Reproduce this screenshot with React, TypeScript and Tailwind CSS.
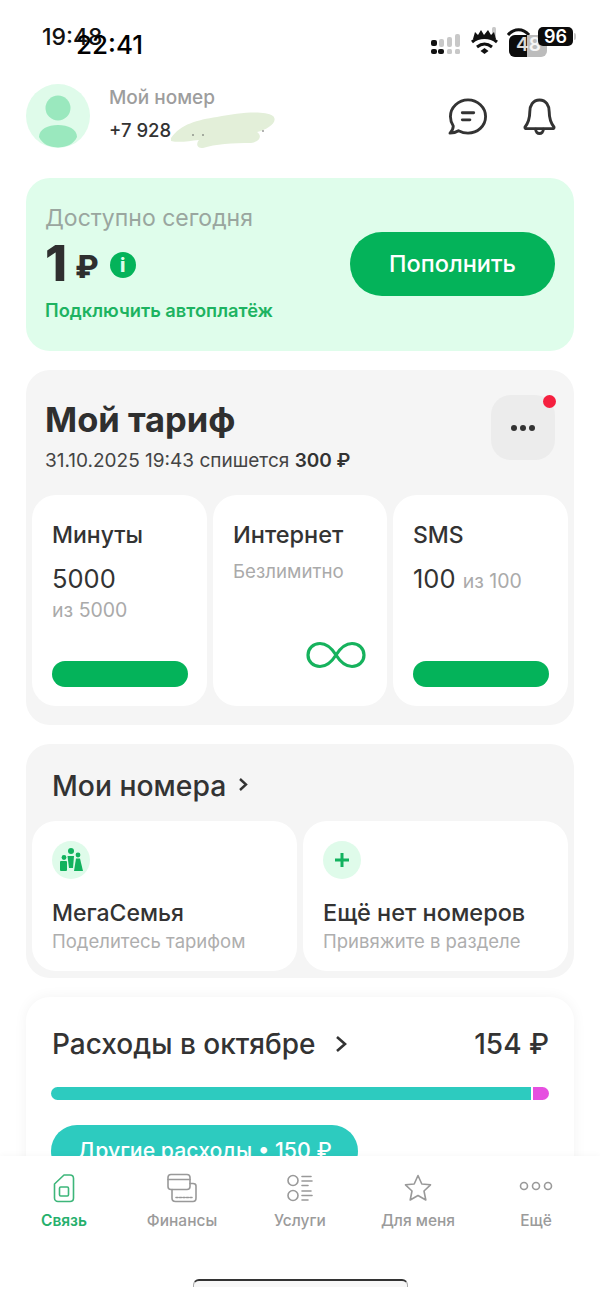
const font = { fontFamily: "Inter, 'Noto Sans', sans-serif" };

const StatusBar = () => (
  <div className="relative h-[84px] shrink-0">
    {/* two status bars on top of each other, as in the screenshot */}
    <span className="absolute left-[42px] top-[23px] text-[23px] font-medium leading-[28px] text-[#111]">19:48</span>
    <span className="absolute left-[76px] top-[30px] text-[26px] font-medium leading-[30px] text-black">22:41</span>
    <svg className="absolute left-[425px] top-[20px]" width="110" height="42" viewBox="0 0 110 42">
      <g fill="#c8c8c8">
        <rect x="14" y="19" width="5" height="8" rx="2" />
        <rect x="22" y="17" width="5" height="10" rx="2" />
        <rect x="30" y="14" width="5" height="13" rx="2" />
        <rect x="22" y="29" width="5" height="5" rx="1.500" />
        <rect x="30" y="29" width="5" height="5" rx="1.500" />
        <rect x="67" y="7" width="4" height="10" rx="1.500" />
      </g>
      <g fill="#111">
        <rect x="6" y="20" width="6" height="6" rx="2" />
        <rect x="6" y="29" width="6" height="5" rx="2" />
        <rect x="13" y="29" width="6" height="5" rx="2" />
      </g>
      <g fill="none" stroke="#111" strokeWidth="3">
        <path d="M47 22 C54 16 65 16 72 22" />
        <path d="M52 27 C57 23 62 23 67 27" />
        <path d="M83 15 C89 8 98 8 104 15" />
      </g>
      <path d="M48 19 L50 12 L53 15 L56 10 L59 15 L63 10 L66 15 L69 12 L71 19 Z" fill="#111" />
      <path d="M55.500 31 L59.500 28 L63.500 31 L59.500 34 Z" fill="#111" />
    </svg>
    <div className="absolute left-[509px] top-[35px] flex h-[22px] w-[38px] overflow-hidden rounded-[6px] bg-[#bcbcbc]">
      <div className="h-full w-[18px] bg-[#0c0c0c]" />
    </div>
    <span className="absolute left-[516px] top-[34px] text-[19px] font-semibold leading-[22px] text-white/85">48</span>
    <div className="absolute left-[538px] top-[27px] flex h-[19px] w-[35px] items-center justify-center rounded-[5px] bg-[#0c0c0c] text-[18px] font-semibold leading-none text-white">
      96
    </div>
    <div className="absolute left-[574px] top-[33px] h-[7px] w-[2px] rounded-r bg-[#c8c8c8]" />
  </div>
);

const Header = () => (
  <div className="flex h-[94px] shrink-0 items-start justify-between pl-[26px] pr-[44px]">
    <div className="flex items-start gap-[19px]">
      <div className="flex h-[64px] w-[64px] items-center justify-center overflow-hidden rounded-full bg-[#DFFBEA]">
        <svg width="64" height="64" viewBox="0 0 64 64" fill="#9AE8BE">
          <circle cx="32" cy="24" r="12.500" />
          <path d="M13 53 C13 45 22 41 32 41 C42 41 51 45 51 53 C48 60 40 63.500 32 63.500 C24 63.500 16 60 13 53 Z" />
        </svg>
      </div>
      <div className="relative">
        <div className="mt-[2px] text-[19px] font-medium leading-[24px] text-[#9d9d9d]">Мой номер</div>
        <div className="mt-[8px] text-[18.500px] font-medium leading-[24px] text-[#333]">+7 928</div>
        <svg className="absolute left-[58px] top-[24px]" width="112" height="44" viewBox="0 0 112 44">
          <path
            d="M4 30 C14 16 30 12 50 9 C72 5 96 2 106 8 C112 14 100 22 90 24 C96 28 92 34 84 35 C66 35 48 36 36 40 C28 40 30 34 32 32 C22 33 12 35 4 33 Z"
            fill="#E3EFD9"
          />
          <circle cx="26" cy="27" r="0.800" fill="#555" />
          <circle cx="36" cy="27" r="0.800" fill="#555" />
          <circle cx="96" cy="23" r="0.800" fill="#555" />
        </svg>
      </div>
    </div>
    <div className="flex items-center gap-[35px] pt-[13px]">
      <svg width="40" height="38" viewBox="0 0 42 40" fill="none" stroke="#333" strokeWidth="3" strokeLinejoin="round" strokeLinecap="round">
        <path d="M21 2 C31 2 39.500 10 39.500 19.500 C39.500 29.500 31 37 21 37 C17 37 14 36 11 34.500 C8 36.500 5 37 2 37 C4 35 5.500 32.500 5.500 29.500 C3.500 26.500 2.500 23 2.500 19.500 C2.500 10 11 2 21 2 Z" />
        <path d="M15 15.500 H27" />
        <path d="M15 23 H23" />
      </svg>
      <svg width="33" height="39" viewBox="0 0 34 40" fill="none" stroke="#333" strokeWidth="3" strokeLinejoin="round" strokeLinecap="round">
        <path d="M17 3 C10 3 7 9 7 15 C7 22 5 27 2 31 C2 32 3 32.500 4 32.500 H30 C31 32.500 32 32 32 31 C29 27 27 22 27 15 C27 9 24 3 17 3 Z" />
        <path d="M13 33 C13 39 21 39 21 33" />
      </svg>
    </div>
  </div>
);

const BalanceCard = () => (
  <section className="flex h-[173px] shrink-0 items-start justify-between rounded-[24px] bg-[#DFFDEB] px-[19px] pt-[26px]">
    <div>
      <div className="text-[23px] leading-[28px] text-[#9aa69f]">Доступно сегодня</div>
      <div className="mt-[6px] flex h-[50px] items-center">
        <span className="text-[50px] font-extrabold leading-[50px] text-[#2f2f2f]">1</span>
        <span className="ml-[8px] mt-[7px] text-[31px] font-extrabold leading-none text-[#2f2f2f]">₽</span>
        <span className="ml-[11px] mt-[4px] flex h-[26px] w-[26px] items-center justify-center rounded-full bg-[#04B35A] text-[19px] font-extrabold leading-none text-[#DFFDEB]">
          i
        </span>
      </div>
      <div className="mt-[10px] text-[18.300px] font-semibold leading-[24px] text-[#1DB361]">Подключить автоплатёж</div>
    </div>
    <button className="mt-[28px] flex h-[64px] w-[205px] items-center justify-center rounded-full bg-[#04B35A] text-[23.500px] font-medium text-white">
      Пополнить
    </button>
  </section>
);

const Bar = () => <div className="h-[26px] w-[136px] rounded-full bg-[#04B35A]" />;

const TariffCard = () => (
  <section className="h-[355px] shrink-0 rounded-[24px] bg-[#F5F5F5] px-[6px] pt-[25px]">
    <div className="flex h-[100px] items-start justify-between pl-[13px] pr-[13px]">
      <div>
        <h2 className="text-[34.500px] font-bold leading-[50px] text-[#2f2f2f]">Мой тариф</h2>
        <div className="mt-[4px] text-[19px] leading-[24px] text-[#444]">
          31.10.2025 19:43 спишется <span className="font-semibold text-[#333]">300 ₽</span>
        </div>
      </div>
      <div className="relative flex h-[65px] w-[64px] items-center justify-center rounded-[20px] bg-[#ECECEC]">
        <svg width="26" height="8" viewBox="0 0 26 8" fill="#333">
          <circle cx="4" cy="4" r="3" />
          <circle cx="13" cy="4" r="3" />
          <circle cx="22" cy="4" r="3" />
        </svg>
        <span className="absolute right-[-1px] top-[0px] h-[13px] w-[13px] rounded-full bg-[#F5203F]" />
      </div>
    </div>
    <div className="grid grid-cols-[175px_174px_175px] gap-[6px]">
      <div className="flex h-[211px] flex-col rounded-[24px] bg-white pl-[20px] pt-[26px]">
        <div className="text-[23px] font-medium leading-[28px] text-[#333]">Минуты</div>
        <div className="mt-[15px] text-[25.500px] leading-[30px] text-[#333]">5000</div>
        <div className="mt-[4px] text-[19.500px] leading-[24px] text-[#aaa]">из 5000</div>
        <div className="mb-[19px] mt-auto">
          <Bar />
        </div>
      </div>
      <div className="relative flex h-[211px] flex-col rounded-[24px] bg-white pl-[20px] pt-[26px]">
        <div className="text-[23.500px] font-medium leading-[28px] text-[#333]">Интернет</div>
        <div className="mt-[11px] text-[18.700px] leading-[24px] text-[#aaa]">Безлимитно</div>
        <svg className="mb-[37px] ml-[73px] mt-auto" width="60" height="28" viewBox="0 0 60 28" fill="none" stroke="#16B25D" strokeWidth="3.200">
          <path d="M30 14 C25 6 20 2.500 14 2.500 C7 2.500 2 7.500 2 14 C2 20.500 7 25.500 14 25.500 C20 25.500 25 22 30 14 C35 6 40 2.500 46 2.500 C53 2.500 58 7.500 58 14 C58 20.500 53 25.500 46 25.500 C40 25.500 35 22 30 14 Z" />
        </svg>
      </div>
      <div className="flex h-[211px] flex-col rounded-[24px] bg-white pl-[20px] pt-[26px]">
        <div className="text-[23px] font-medium leading-[28px] text-[#333]">SMS</div>
        <div className="mt-[15px] text-[25.500px] leading-[30px] text-[#333]">
          100 <span className="text-[19.500px] text-[#aaa]">из 100</span>
        </div>
        <div className="mb-[19px] mt-auto">
          <Bar />
        </div>
      </div>
    </div>
  </section>
);

const NumbersCard = () => (
  <section className="h-[234px] shrink-0 rounded-[24px] bg-[#F5F5F5] px-[6px] pt-[21px]">
    <div className="flex h-[56px] items-start pl-[20px]">
      <h2 className="text-[28.300px] font-medium leading-[42px] text-[#333]">Мои номера</h2>
      <svg className="ml-[12px] mt-[12px]" width="10" height="15" viewBox="0 0 10 15" fill="none" stroke="#333" strokeWidth="2.400">
        <path d="M2 2 L8 7.500 L2 13" />
      </svg>
    </div>
    <div className="grid grid-cols-2 gap-[6px]">
      <div className="h-[150px] rounded-[24px] bg-white pl-[20px] pt-[20px]">
        <div className="flex h-[38px] w-[38px] items-center justify-center rounded-full bg-[#DFFBEA]">
          <svg width="26" height="26" viewBox="0 0 26 26" fill="#12B25E">
            <circle cx="13" cy="4" r="3" />
            <circle cx="20" cy="8" r="2.400" />
            <circle cx="6" cy="10.500" r="2.400" />
            <path d="M9.500 9 H16 L15 21 H11 Z" />
            <rect x="2" y="14" width="7" height="10" rx="1" />
            <path d="M18 11.500 H22 L25 24 H16 Z" />
          </svg>
        </div>
        <div className="mt-[20px] text-[23px] font-medium leading-[28px] text-[#333]">МегаСемья</div>
        <div className="mt-[2px] text-[18.500px] leading-[24px] text-[#aeaeae]">Поделитесь тарифом</div>
      </div>
      <div className="h-[150px] rounded-[24px] bg-white pl-[20px] pt-[20px]">
        <div className="flex h-[38px] w-[38px] items-center justify-center rounded-full bg-[#DFFBEA]">
          <svg width="18" height="18" viewBox="0 0 18 18" fill="none" stroke="#12B25E" strokeWidth="3">
            <path d="M9 2 V16 M2 9 H16" />
          </svg>
        </div>
        <div className="mt-[20px] text-[23.500px] font-medium leading-[28px] text-[#333]">Ещё нет номеров</div>
        <div className="mt-[2px] text-[18.500px] leading-[24px] text-[#aeaeae]">Привяжите в разделе</div>
      </div>
    </div>
  </section>
);

const ExpensesCard = () => (
  <section className="h-[240px] shrink-0 rounded-[24px] bg-white px-[25px] pt-[26px] shadow-[0_0_14px_rgba(0,0,0,0.05)]">
    <div className="flex h-[42px] items-center justify-between">
      <div className="flex items-center">
        <span className="pl-[1px] text-[28px] font-medium leading-[42px] text-[#333]">Расходы в октябре</span>
        <svg className="ml-[20px]" width="12" height="18" viewBox="0 0 12 18" fill="none" stroke="#333" strokeWidth="2.600">
          <path d="M2 2 L10 9 L2 16" />
        </svg>
      </div>
      <span className="text-[28px] font-medium leading-[42px] text-[#333]">154 ₽</span>
    </div>
    <div className="mt-[22px] flex h-[13px] w-[498px] gap-[2px] overflow-hidden rounded-full">
      <div className="flex-1 bg-[#2DCBBF]" />
      <div className="w-[16px] bg-[#E64FE0]" />
    </div>
    <div className="mt-[25px] flex h-[52px] w-[307px] items-center justify-center rounded-[26px] bg-[#2DCBBF] text-[21.300px] font-medium text-white">
      Другие расходы • 150 ₽
    </div>
  </section>
);

const navStroke = { fill: "none", strokeWidth: 1.6, strokeLinejoin: "round", strokeLinecap: "round" } as const;

const NAV = [
  {
    label: "Связь",
    active: true,
    icon: (
      <svg width="22" height="30" viewBox="0 0 22 30" {...navStroke} stroke="#3DB67A">
        <path d="M11 2 H17 C19 2 20.500 3.500 20.500 5.500 V25 C20.500 27 19 28.500 17 28.500 H5 C3 28.500 1.500 27 1.500 25 V11 Z" />
        <rect x="6.500" y="14" width="9" height="9" rx="1.200" />
      </svg>
    ),
  },
  {
    label: "Финансы",
    icon: (
      <svg width="30" height="30" viewBox="0 0 30 30" {...navStroke} stroke="#999">
        <rect x="1" y="1.500" width="22" height="15" rx="3" />
        <path d="M1 6.500 H23" />
        <path d="M5 16.500 V25 C5 27 6.500 28.500 8.500 28.500 H26 C28 28.500 29 27 29 25 V13 C29 11.500 28 10.500 26 10.500 H23" />
        <path d="M9 24.500 H25" strokeDasharray="2 1.500" />
      </svg>
    ),
  },
  {
    label: "Услуги",
    icon: (
      <svg width="26" height="28" viewBox="0 0 26 28" {...navStroke} stroke="#999">
        <circle cx="6" cy="6.500" r="5" />
        <circle cx="6" cy="21.500" r="5" />
        <path d="M15 2.500 H24 M15 7 H25 M15 11.500 H21 M15 17 H24 M15 21.500 H25 M15 26 H21" />
      </svg>
    ),
  },
  {
    label: "Для меня",
    icon: (
      <svg width="28" height="28" viewBox="0 0 28 28" {...navStroke} stroke="#999">
        <path d="M14 1.500 L17.800 10 L26.500 10.800 L20 17 L21.800 26 L14 21.500 L6.200 26 L8 17 L1.500 10.800 L10.200 10 Z" />
      </svg>
    ),
  },
  {
    label: "Ещё",
    icon: (
      <svg className="mb-[4px]" width="34" height="10" viewBox="0 0 34 10" {...navStroke} stroke="#999">
        <circle cx="5" cy="5" r="3.500" />
        <circle cx="17" cy="5" r="3.500" />
        <circle cx="29" cy="5" r="3.500" />
      </svg>
    ),
  },
];

const BottomNav = () => (
  <nav className="relative flex h-[144px] shrink-0 flex-col bg-white px-[5px] pt-[15px] shadow-[0_-1px_6px_rgba(0,0,0,0.03)]">
    <div className="grid grid-cols-5">
      {NAV.map((item) => (
        <div key={item.label} className="flex flex-col items-center">
          <div className="flex h-[34px] items-center justify-center">{item.icon}</div>
          <span className={`mt-[4px] text-[15.500px] font-medium leading-[24px] ${item.active ? "font-semibold text-[#26B06D]" : "text-[#9b9b9b]"}`}>
            {item.label}
          </span>
        </div>
      ))}
    </div>
    {/* home indicator */}
    <div className="mx-auto mt-[46px] h-[8px] w-[215px] rounded-t-[6px] border-x border-t-2 border-x-[#aaa] border-t-[#333] bg-[#f7f7f7]" />
  </nav>
);

export default function App() {
  return (
    <div className="relative flex h-[1300px] w-[600px] flex-col overflow-hidden bg-white" style={font}>
      <StatusBar />
      <Header />
      <main className="flex min-h-0 flex-1 flex-col gap-[19px] overflow-hidden px-[26px]">
        <BalanceCard />
        <TariffCard />
        <NumbersCard />
        <ExpensesCard />
      </main>
      <BottomNav />
    </div>
  );
}
